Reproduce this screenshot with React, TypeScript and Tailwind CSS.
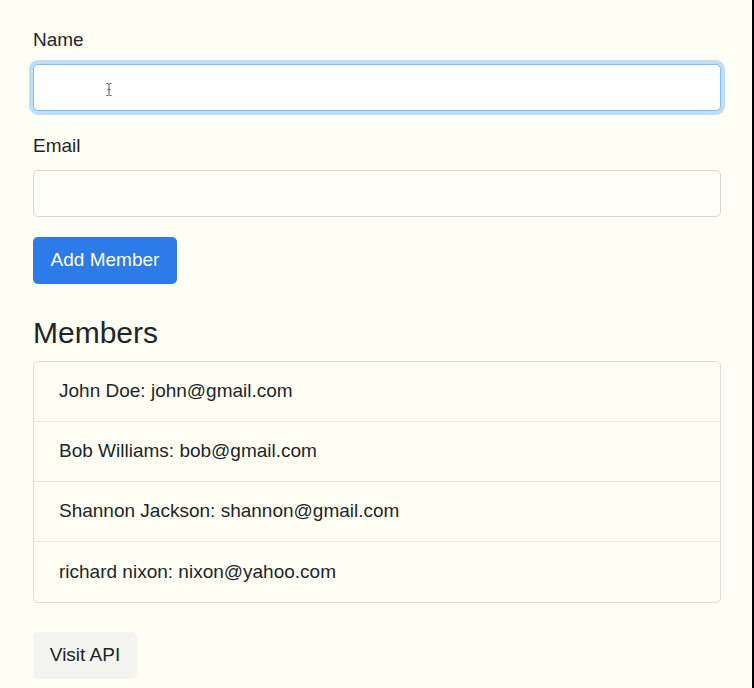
const members = [
  { name: 'John Doe', email: 'john@gmail.com' },
  { name: 'Bob Williams', email: 'bob@gmail.com' },
  { name: 'Shannon Jackson', email: 'shannon@gmail.com' },
  { name: 'richard nixon', email: 'nixon@yahoo.com' },
];

function IBeam() {
  return (
    <svg className="pointer-events-none absolute left-[73px] top-[19px]" width="6" height="13" viewBox="0 0 6 13">
      <path d="M0.5 0.5h2M3.5 0.5h2M3 1v11M0.5 12.5h2M3.5 12.5h2M1.5 6.5h3" stroke="#555" strokeWidth="1" fill="none" />
    </svg>
  );
}

export default function App() {
  return (
    <div className="flex min-h-screen bg-[#fffff6] font-['Liberation_Sans',Arial,sans-serif] text-[19px] text-[#212529]">
      <div className="flex-1">
        <div className="ml-[33px] w-[688px] pt-[26px] pb-[10px]">
          <form onSubmit={(e) => e.preventDefault()}>
            <label className="mb-[10px] block leading-[28px]">Name</label>
            <div className="relative">
              <input
                type="text"
                className="block h-[47px] w-full rounded-[5px] border border-[#80bdff] bg-white px-[14px] shadow-[0_0_0_4px_rgba(0,123,255,0.25)] outline-none"
              />
              <IBeam />
            </div>

            <label className="mt-[21px] mb-[10px] block leading-[28px]">Email</label>
            <input
              type="email"
              className="block h-[47px] w-full rounded-[5px] border border-[#d8d8d2] bg-[#fffff8] px-[14px] outline-none"
            />

            <button
              type="submit"
              className="mt-[20px] flex h-[47px] w-[144px] items-center justify-center rounded-[5px] bg-[#2c7be8] text-white"
            >
              Add Member
            </button>
          </form>

          <h3 className="mt-[31px] mb-[11px] text-[30px] leading-[35px] font-medium">Members</h3>

          <ul className="rounded-[5px] border border-[#deded8]">
            {members.map((m, i) => (
              <li
                key={m.email}
                className={
                  'flex h-[60px] items-center px-[25px] ' + (i < members.length - 1 ? 'border-b border-[#e6e6dc]' : '')
                }
              >
                {m.name}: {m.email}
              </li>
            ))}
          </ul>

          <a
            href="#"
            className="mt-[29px] flex h-[47px] w-[104px] items-center justify-center rounded-[5px] bg-[#f3f3f0]"
          >
            Visit API
          </a>
        </div>
      </div>
      <div className="w-[2px] shrink-0 bg-black" />
    </div>
  );
}
